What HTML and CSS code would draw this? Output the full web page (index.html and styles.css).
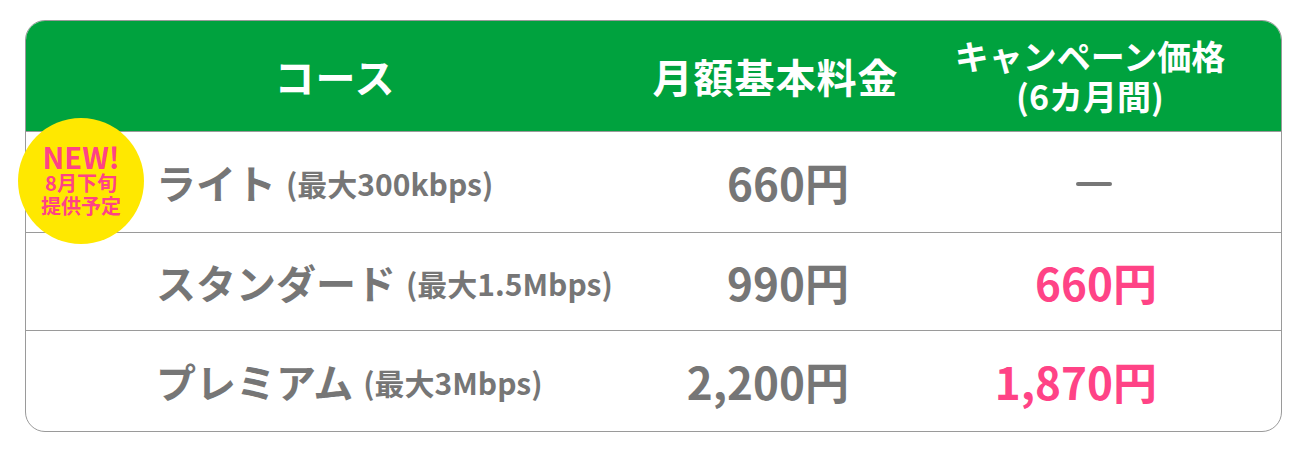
FILE: index.html
```html
<!DOCTYPE html>
<html lang="ja">
<head>
<meta charset="utf-8">
<title>料金プラン</title>
<link rel="stylesheet" href="styles.css">
</head>
<body>
  <div class="plan-table">
    <div class="row head">
      <div class="cell h-course">コース</div>
      <div class="cell h-price">月額基本料金</div>
      <div class="cell h-camp"><span class="hc-line">キャンペーン価格</span><span class="hc-line">(6カ月間)</span></div>
    </div>
    <div class="row r1">
      <div class="cell course"><span class="name">ライト</span><span class="speed">(最大300kbps)</span></div>
      <div class="cell price">660円</div>
      <div class="cell camp none"><span class="dash"></span></div>
    </div>
    <div class="row r2">
      <div class="cell course"><span class="name">スタンダード</span><span class="speed">(最大1.5Mbps)</span></div>
      <div class="cell price">990円</div>
      <div class="cell camp">660円</div>
    </div>
    <div class="row r3">
      <div class="cell course"><span class="name">プレミアム</span><span class="speed">(最大3Mbps)</span></div>
      <div class="cell price">2,200円</div>
      <div class="cell camp">1,870円</div>
    </div>
    <div class="badge">
      <span class="b-new">NEW!</span>
      <span class="b-sub">8月下旬</span>
      <span class="b-sub">提供予定</span>
    </div>
  </div>
</body>
</html>
```

FILE: styles.css
```css
html, body {
  margin: 0;
  padding: 0;
  background: #ffffff;
}

body {
  padding: 20px 0 0 25px;
  font-family: "Noto Sans CJK JP", "Noto Sans", sans-serif;
  color: #767676;
}

.plan-table {
  position: relative;
  width: 1255px;
  border: 1px solid #9a9a9a;
  border-radius: 20px;
}

.row {
  display: grid;
  grid-template-columns: 618px 261px 376px;
  border-bottom: 1px solid #9a9a9a;
}

.r1 { height: 100px; }
.r2 { height: 97px; }
.r3 { height: 100px; border-bottom: none; }

.row.head {
  height: 110px;
  background: #00a23e;
  border-radius: 19px 19px 0 0;
  color: #ffffff;
  font-weight: 700;
}

.cell {
  display: flex;
  align-items: center;
}

.h-course,
.h-price {
  justify-content: center;
  font-size: 40px;
  letter-spacing: 1px;
}

.h-price {
  padding-left: 2px;
}

.h-camp {
  flex-direction: column;
  justify-content: center;
  align-items: center;
  font-size: 34px;
  line-height: 40px;
  padding-right: 6px;
}

.hc-line {
  display: block;
}

.course {
  padding-left: 130px;
}

.name {
  font-size: 40px;
  font-weight: 700;
}

.speed {
  font-size: 30px;
  font-weight: 700;
  margin-left: 10px;
  padding-top: 2px;
}

.price,
.camp {
  justify-content: flex-end;
  font-size: 44px;
  font-weight: 700;
}

.price {
  padding-right: 56px;
}

.camp {
  padding-right: 124px;
  color: #ff4386;
}

.camp.none {
  justify-content: center;
  padding-right: 0;
  padding-top: 4px;
}

.dash {
  display: block;
  width: 36px;
  height: 4px;
  border-radius: 2px;
  background: #777777;
  margin-left: 2px;
}

.badge {
  position: absolute;
  left: -8px;
  top: 97px;
  width: 126px;
  height: 126px;
  border-radius: 50%;
  background: #ffe800;
  color: #ff4386;
  font-weight: 700;
  display: flex;
  flex-direction: column;
  align-items: center;
  justify-content: center;
  padding-bottom: 4px;
  box-sizing: border-box;
}

.b-new {
  font-size: 29px;
  line-height: 30px;
}

.b-sub {
  font-size: 20px;
  line-height: 23px;
}
```
